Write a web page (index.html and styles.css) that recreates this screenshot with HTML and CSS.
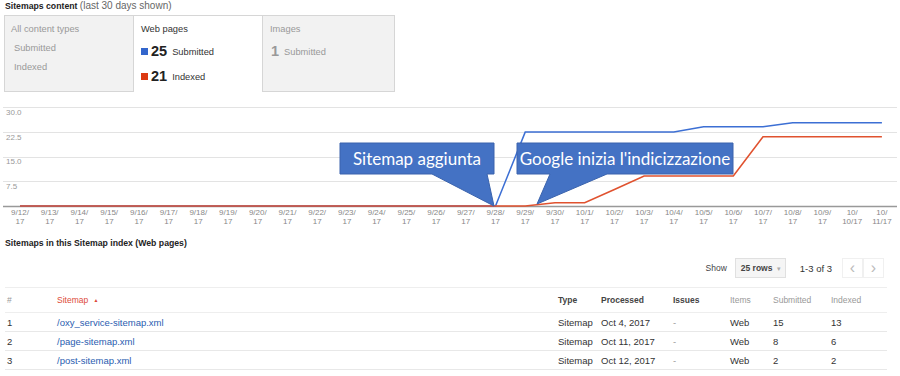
FILE: index.html
```html
<!DOCTYPE html>
<html lang="en">
<head>
    <meta charset="UTF-8">
    <title>Sitemaps</title>
    <link rel="stylesheet" href="styles.css">
</head>
<body>
    <h1 class="section-title">Sitemaps content <span class="muted">(last 30 days shown)</span></h1>

    <div class="tabs">
        <div class="tab tab-first">
            <div class="tab-name">All content types</div>
            <div class="tab-sub">Submitted</div>
            <div class="tab-sub">Indexed</div>
        </div>
        <div class="tab tab-active">
            <div class="tab-name">Web pages</div>
            <div class="stat"><span class="swatch swatch-blue"></span><b>25</b><span>Submitted</span></div>
            <div class="stat"><span class="swatch swatch-red"></span><b>21</b><span>Indexed</span></div>
        </div>
        <div class="tab tab-last">
            <div class="tab-name">Images</div>
            <div class="stat stat-gray"><b>1</b><span>Submitted</span></div>
        </div>
    </div>

    <svg class="chart" id="chart" width="900" height="130" viewBox="0 0 900 130">
        <g class="grid">
            <line x1="3" y1="7.5" x2="897" y2="7.5"/>
            <line x1="3" y1="32.5" x2="897" y2="32.5"/>
            <line x1="3" y1="57.5" x2="897" y2="57.5"/>
            <line x1="3" y1="81.5" x2="897" y2="81.5"/>
        </g>
        <g class="ylabels">
            <text x="6" y="15">30.0</text>
            <text x="6" y="40">22.5</text>
            <text x="6" y="64">15.0</text>
            <text x="6" y="89">7.5</text>
        </g>
        <line class="axis" x1="3" y1="106.5" x2="897" y2="106.5"/>
        <g class="xlabels" id="xlabels"></g>
        <polyline class="line-blue" id="lineSubmitted"/>
        <polyline class="line-red" id="lineIndexed"/>
        <g class="callout">
            <path d="M340 43 H494 V74 H487 L494 106 L432 74 H340 Z"/>
            <text x="417" y="65">Sitemap aggiunta</text>
        </g>
        <g class="callout">
            <path d="M517 43 H733 V74 H607 L537 104 L550 74 H517 Z"/>
            <text x="625" y="65">Google inizia l'indicizzazione</text>
        </g>
    </svg>

    <h2 class="section-title">Sitemaps in this Sitemap index (Web pages)</h2>

    <div class="toolbar">
        <span class="show-label">Show</span>
        <span class="rows-select">25 rows <span class="caret">&#9662;</span></span>
        <span class="range">1-3 of 3</span>
        <span class="pager">
            <span class="pager-btn">&#8249;</span><span class="pager-btn">&#8250;</span>
        </span>
    </div>

    <table class="sitemaps">
        <colgroup>
            <col style="width:50px"><col style="width:501px"><col style="width:43px"><col style="width:72px">
            <col style="width:57px"><col style="width:43px"><col style="width:58px"><col style="width:58px">
        </colgroup>
        <thead>
            <tr>
                <th class="light">#</th>
                <th class="sorted">Sitemap <span class="sort-arrow">&#9650;</span></th>
                <th>Type</th>
                <th>Processed</th>
                <th>Issues</th>
                <th class="light">Items</th>
                <th class="light">Submitted</th>
                <th class="light">Indexed</th>
            </tr>
        </thead>
        <tbody>
            <tr><td>1</td><td><a href="#">/oxy_service-sitemap.xml</a></td><td>Sitemap</td><td>Oct 4, 2017</td><td class="dash">-</td><td>Web</td><td>15</td><td>13</td></tr>
            <tr><td>2</td><td><a href="#">/page-sitemap.xml</a></td><td>Sitemap</td><td>Oct 11, 2017</td><td class="dash">-</td><td>Web</td><td>8</td><td>6</td></tr>
            <tr><td>3</td><td><a href="#">/post-sitemap.xml</a></td><td>Sitemap</td><td>Oct 12, 2017</td><td class="dash">-</td><td>Web</td><td>2</td><td>2</td></tr>
        </tbody>
    </table>

    <script>
        // Данные графика: 30 дней, с 12.09.2017
        const submitted = [0,0,0,0,0,0,0,0,0,0,0,0,0,0,0,0,0,22.4,22.4,22.4,22.4,22.4,22.4,24,24,24,25.2,25.2,25.2,25.2];
        const indexed   = [0,0,0,0,0,0,0,0,0,0,0,0,0,0,0,0,0,0,1,1,5,9.1,9.1,9.1,9.1,21,21,21,21,21];

        const x0 = 20, step = 29.72, base = 106, scale = 3.3;
        const svgNS = 'http://www.w3.org/2000/svg';

        function toPoints(values) {
            return values.map((v, i) => (x0 + i * step).toFixed(1) + ',' + (base - v * scale).toFixed(1)).join(' ');
        }

        document.getElementById('lineSubmitted').setAttribute('points', toPoints(submitted));
        document.getElementById('lineIndexed').setAttribute('points', toPoints(indexed));

        // Подписи оси X
        const labels = document.getElementById('xlabels');
        for (let i = 0; i < 30; i++) {
            const d = new Date(2017, 8, 12 + i);
            let top = (d.getMonth() + 1) + '/' + d.getDate() + '/';
            let bottom = '17';
            if (top.length > 5) {
                bottom = d.getDate() + '/17';
                top = (d.getMonth() + 1) + '/';
            }
            [[top, 115], [bottom, 124]].forEach(([txt, y]) => {
                const t = document.createElementNS(svgNS, 'text');
                t.setAttribute('x', (x0 + i * step).toFixed(1));
                t.setAttribute('y', y);
                t.textContent = txt;
                labels.appendChild(t);
            });
        }
    </script>
</body>
</html>
```

FILE: styles.css
```css
body {
    margin: 0;
    font-family: "Liberation Sans", Arial, sans-serif;
    color: #333;
    background: #fff;
}
.section-title {
    margin: 0;
    padding-left: 5px;
    font-size: 8.7px;
    line-height: 12px;
    font-weight: bold;
    color: #222;
}
.section-title .muted {
    font-weight: normal;
    font-size: 10px;
    color: #666;
}
h2.section-title {
    margin-top: 7px;
}
.tabs {
    display: flex;
    margin: 3px 0 0 4px;
    height: 77px;
}
.tab {
    box-sizing: border-box;
    height: 77px;
    padding-top: 7px;
    font-size: 9.3px;
    border-top: 1px solid #d6d6d6;
}
.tab-first {
    width: 129px;
    padding-left: 6px;
    background: #f2f2f2;
    border-left: 1px solid #d6d6d6;
    border-bottom: 1px solid #d6d6d6;
    color: #999;
}
.tab-active {
    width: 130px;
    padding-left: 7px;
    background: #fff;
    border-left: 1px solid #d6d6d6;
    border-right: 1px solid #d6d6d6;
    color: #333;
}
.tab-last {
    width: 132px;
    padding-left: 7px;
    background: #f2f2f2;
    border-right: 1px solid #d6d6d6;
    border-bottom: 1px solid #d6d6d6;
    color: #999;
}
.tab-name {
    line-height: 12px;
}
.tab-sub {
    margin-top: 7px;
    padding-left: 3px;
    line-height: 12px;
}
.tab-sub + .tab-sub {
    margin-top: 7px;
}
.stat {
    display: flex;
    align-items: center;
    height: 18px;
    margin-top: 7px;
}
.stat + .stat {
    margin-top: 7px;
}
.stat b {
    font-size: 14.5px;
    color: #222;
    margin-right: 5px;
}
.stat span:last-child {
    padding-top: 2px;
}
.stat-gray b {
    color: #999;
    margin-left: 1px;
}
.swatch {
    width: 7px;
    height: 7px;
    margin-right: 3px;
    margin-top: 1px;
}
.swatch-blue {
    background: #3366cc;
}
.swatch-red {
    background: #dc3912;
}
.chart {
    display: block;
    margin-top: 8px;
}
.grid line {
    stroke: #e3e3e3;
    stroke-width: 1;
}
.axis {
    stroke: #999;
    stroke-width: 1.3;
}
.ylabels text {
    font-size: 8px;
    fill: #999;
}
.xlabels text {
    font-size: 8px;
    fill: #888;
    text-anchor: middle;
}
.line-blue {
    fill: none;
    stroke: #3c6fd4;
    stroke-width: 1.5;
}
.line-red {
    fill: none;
    stroke: #e0522f;
    stroke-width: 1.6;
}
.callout path {
    fill: #4472c4;
    stroke: #3a63ad;
    stroke-width: 1;
}
.callout text {
    font-family: Lato, "Open Sans", sans-serif;
    font-size: 17px;
    fill: #fff;
    text-anchor: middle;
}
.toolbar {
    display: flex;
    justify-content: flex-end;
    align-items: center;
    height: 20px;
    margin-top: 9px;
    padding-right: 16px;
    font-size: 9.5px;
}
.show-label {
    font-size: 8.5px;
    color: #444;
    margin-right: 8px;
}
.rows-select {
    box-sizing: border-box;
    width: 51px;
    height: 20px;
    line-height: 18px;
    padding-left: 5px;
    font-size: 8.5px;
    font-weight: bold;
    color: #444;
    background: #f5f5f5;
    border: 1px solid #e0e0e0;
}
.caret {
    color: #aaa;
    font-size: 7px;
    font-weight: normal;
    margin-left: 2px;
}
.range {
    margin-left: 14px;
    margin-right: 10px;
    color: #333;
}
.pager {
    display: flex;
}
.pager-btn {
    box-sizing: border-box;
    width: 21px;
    height: 20px;
    line-height: 17px;
    text-align: center;
    font-size: 16px;
    color: #bbb;
    border: 1px solid #f0f0f0;
}
.sitemaps {
    margin: 9px 0 0 5px;
    border-collapse: collapse;
    table-layout: fixed;
    width: 882px;
}
.sitemaps th {
    height: 24px;
    padding: 0 0 0 2px;
    text-align: left;
    font-size: 8.5px;
    font-weight: bold;
    color: #444;
    border-top: 1px solid #eee;
    border-bottom: 1px solid #eee;
}
.sitemaps th.light {
    font-weight: normal;
    color: #999;
}
.sitemaps th.sorted {
    font-weight: normal;
    color: #dd4b39;
}
.sort-arrow {
    font-size: 5px;
    margin-left: 3px;
    vertical-align: 1px;
}
.sitemaps td {
    height: 18px;
    padding: 0 0 0 2px;
    font-size: 9.5px;
    color: #333;
    border-bottom: 1px solid #e8e8e8;
}
.sitemaps td.dash {
    color: #999;
}
.sitemaps a {
    color: #2a5db0;
    text-decoration: none;
}
```
